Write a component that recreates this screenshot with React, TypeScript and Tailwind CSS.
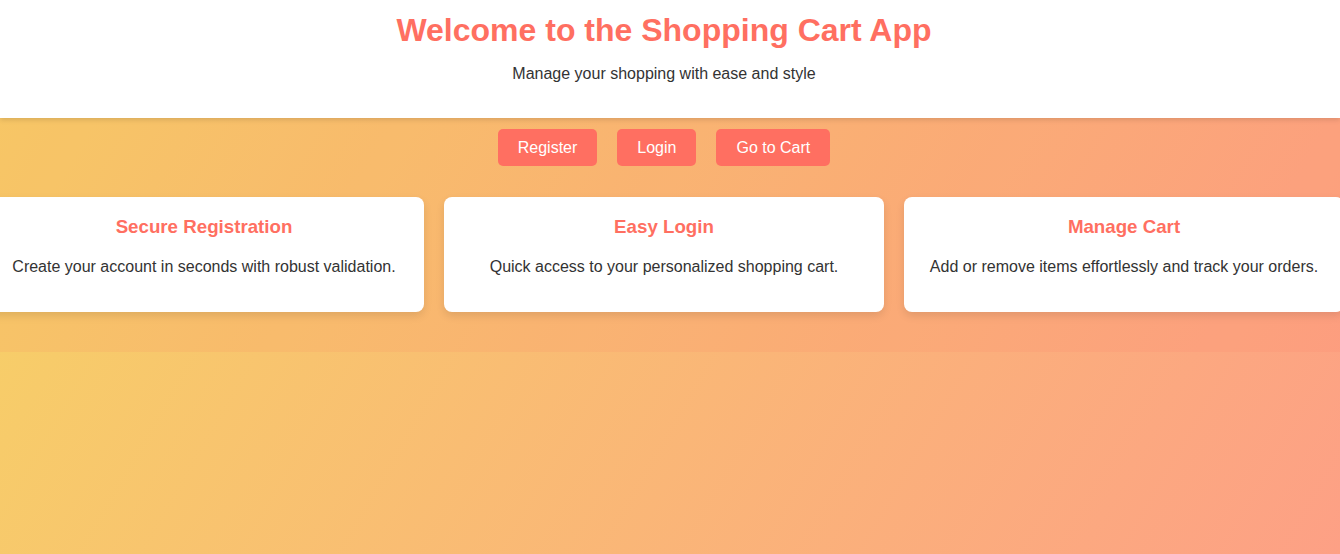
import React from "react";

const cards = [
  { title: "Secure Registration", text: "Create your account in seconds with robust validation." },
  { title: "Easy Login", text: "Quick access to your personalized shopping cart." },
  { title: "Manage Cart", text: "Add or remove items effortlessly and track your orders." },
];

export default function App() {
  return (
    <div
      className="min-h-screen overflow-hidden bg-[linear-gradient(120deg,#f6d365_0%,#fda085_100%)] text-[#333]"
      style={{ fontFamily: '"Liberation Sans", Arial, sans-serif' }}
    >
      <header className="relative z-10 h-[118px] bg-white pr-3 pt-[12px] text-center shadow-[0_2px_5px_rgba(0,0,0,0.12)]">
        <h1 className="text-[32px] font-bold leading-[normal] text-[#ff6f61]">
          Welcome to the Shopping Cart App
        </h1>
        <p className="mt-[16px] text-base leading-[normal] text-[#333]">
          Manage your shopping with ease and style
        </p>
      </header>
      <main className="h-[234px] bg-[rgba(255,107,97,0.1)] pr-3 pt-[11px]">
        <nav className="flex justify-center gap-5">
          <button className="h-[37px] rounded-[5px] bg-[#ff6f61] px-5 pt-px text-base leading-[normal] text-white">
            Register
          </button>
          <button className="h-[37px] rounded-[5px] bg-[#ff6f61] px-5 pt-px text-base leading-[normal] text-white">
            Login
          </button>
          <button className="h-[37px] rounded-[5px] bg-[#ff6f61] px-5 pt-px text-base leading-[normal] text-white">
            Go to Cart
          </button>
        </nav>
        <section className="mt-[31px] flex justify-center gap-5">
          {cards.map((c) => (
            <div
              key={c.title}
              className="h-[115px] w-[440px] shrink-0 rounded-lg bg-white px-5 pt-[19px] text-center shadow-[0_4px_8px_rgba(0,0,0,0.1)]"
            >
              <h3 className="text-[18.72px] font-bold leading-[normal] text-[#ff6f61]">{c.title}</h3>
              <p className="mt-[20px] text-base leading-[normal] text-[#333]">{c.text}</p>
            </div>
          ))}
        </section>
      </main>
    </div>
  );
}
